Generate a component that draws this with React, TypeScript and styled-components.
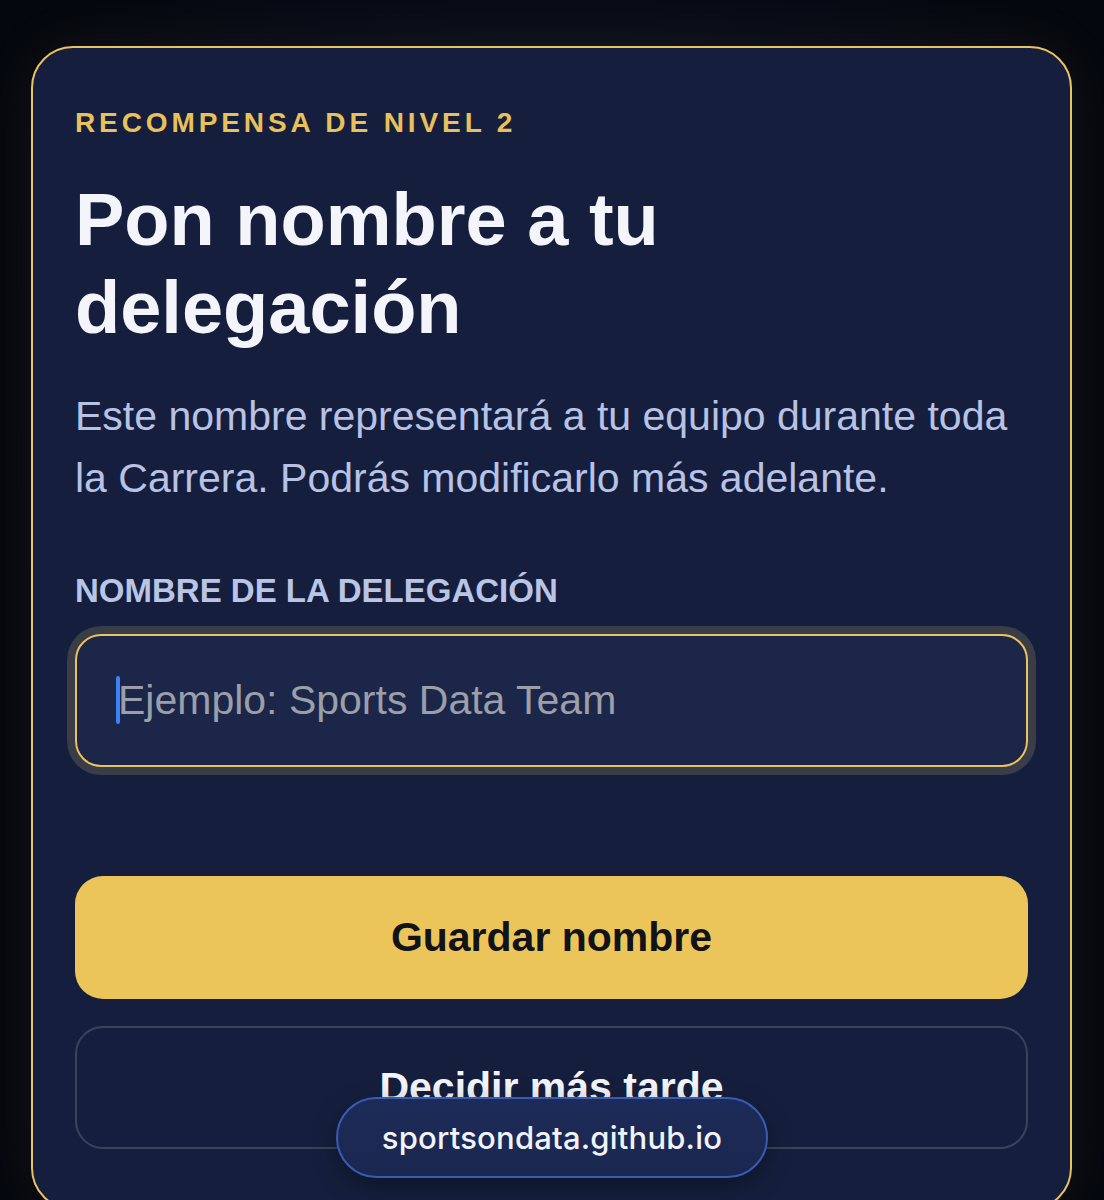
import React from 'react'
import styled, { createGlobalStyle } from 'styled-components'

const GlobalStyle = createGlobalStyle`
  html, body {
    margin: 0;
    padding: 0;
    height: 1200px;
    overflow: hidden;
    background: #04070e;
  }
  * {
    box-sizing: border-box;
  }
`

const App: React.FC = () => {
  return (
    <>
      <GlobalStyle />
      <Page>
        <Card>
          <Eyebrow>Recompensa de nivel 2</Eyebrow>
          <Title>Pon nombre a tu delegación</Title>
          <Description>
            Este nombre representará a tu equipo durante toda la Carrera. Podrás modificarlo más adelante.
          </Description>
          <FieldLabel htmlFor="team-name">Nombre de la delegación</FieldLabel>
          <InputRing>
            <Caret />
            <NameInput id="team-name" type="text" placeholder="Ejemplo: Sports Data Team" />
          </InputRing>
          <Actions>
            <Button variant="primary">Guardar nombre</Button>
            <Button variant="ghost">Decidir más tarde</Button>
          </Actions>
        </Card>
        <UrlPill>sportsondata.github.io</UrlPill>
      </Page>
    </>
  )
}

const Page = styled.div`
  position: relative;
  height: 1200px;
  overflow: hidden;
  padding: 46px 32px 0 31px;
  background: radial-gradient(ellipse at 50% 30%, #0a1020 0%, #04070e 70%);
  font-family: "Liberation Sans", Arial, sans-serif;
`

const Card = styled.div`
  display: flex;
  flex-direction: column;
  height: 1164px;
  border: 2px solid #e9c261;
  border-radius: 42px;
  background: #151f3d;
  padding: 58px 42px 0 42px;
  box-shadow: 0 0 60px rgba(233, 194, 97, 0.08);
`

const Eyebrow = styled.div`
  color: #e9c15b;
  font-size: 28px;
  font-weight: 700;
  letter-spacing: 3.9px;
  text-transform: uppercase;
  line-height: 34px;
`

const Title = styled.h1`
  margin: 36px 0 0 0;
  color: #f3f5fb;
  font-size: 74px;
  font-weight: 700;
  line-height: 88px;
  max-width: 700px;
`

const Description = styled.p`
  margin: 33px 0 0 0;
  color: #b7c2e4;
  font-size: 41px;
  line-height: 62px;
`

const FieldLabel = styled.label`
  display: block;
  margin-top: 62px;
  color: #bac5e6;
  font-size: 33px;
  font-weight: 700;
  line-height: 40px;
  text-transform: uppercase;
`

const InputRing = styled.div`
  position: relative;
  margin-top: 23px;
  border-radius: 26px;
  box-shadow: 0 0 0 8px #383d47;
`

const Caret = styled.span`
  position: absolute;
  left: 41px;
  top: 42px;
  width: 4px;
  height: 48px;
  border-radius: 2px;
  background: #3b82f6;
`

const NameInput = styled.input`
  display: block;
  width: 100%;
  height: 133px;
  padding: 0 41px;
  border: 2px solid #e9c261;
  border-radius: 26px;
  background: #1b2649;
  color: #f3f5fb;
  font-family: "Liberation Sans", Arial, sans-serif;
  font-size: 41px;
  outline: none;

  &::placeholder {
    color: #9b9fa9;
  }
`

const Actions = styled.div`
  display: flex;
  flex-direction: column;
  gap: 27px;
  margin-top: 109px;
`

const Button = styled.button<{ variant: 'primary' | 'ghost' }>`
  height: 123px;
  border-radius: 28px;
  font-family: "Liberation Sans", Arial, sans-serif;
  font-size: 41px;
  font-weight: 700;
  cursor: pointer;
  border: ${p => (p.variant === 'primary' ? 'none' : '2px solid rgba(255, 255, 255, 0.16)')};
  background: ${p => (p.variant === 'primary' ? '#ecc55a' : 'transparent')};
  color: ${p => (p.variant === 'primary' ? '#111318' : '#f3f5fb')};
`

const UrlPill = styled.div`
  position: absolute;
  left: 50%;
  bottom: 22px;
  transform: translateX(-50%);
  width: 432px;
  height: 81px;
  display: flex;
  align-items: center;
  justify-content: center;
  border: 2px solid #3a5bb5;
  border-radius: 41px;
  background: linear-gradient(180deg, #1d2b58 0%, #1a2750 100%);
  box-shadow: 0 8px 24px rgba(0, 0, 0, 0.35);
  color: #f1f3f8;
  font-family: Inter, "Noto Sans", sans-serif;
  font-size: 31px;
  font-weight: 500;
  letter-spacing: 0.2px;
`

export default App
